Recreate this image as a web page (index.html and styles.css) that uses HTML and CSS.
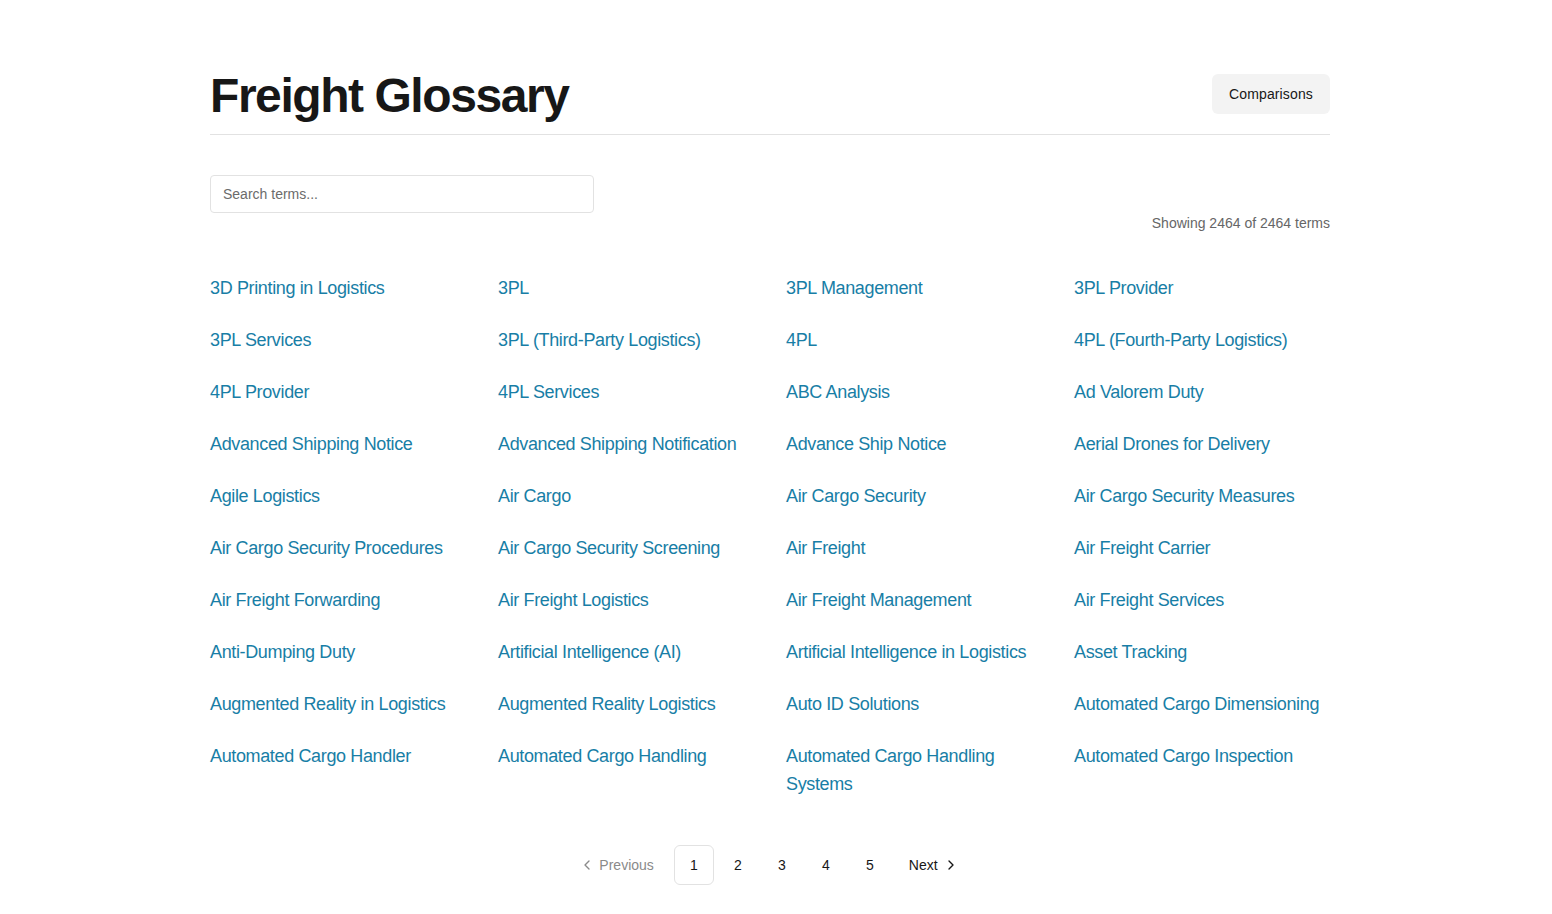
FILE: index.html
```html
<!DOCTYPE html>
<html lang="en">
<head>
<meta charset="utf-8">
<title>Freight Glossary</title>
<link rel="stylesheet" href="styles.css">
</head>
<body>
<div class="page">
  <header class="header">
    <h1 class="title">Freight Glossary</h1>
    <button class="btn-secondary">Comparisons</button>
  </header>
  <div class="search-row">
    <input class="search" type="text" placeholder="Search terms...">
  </div>
  <p class="count">Showing 2464 of 2464 terms</p>
  <ul class="terms">
    <li><a href="#">3D Printing in Logistics</a></li>
    <li><a href="#">3PL</a></li>
    <li><a href="#">3PL Management</a></li>
    <li><a href="#">3PL Provider</a></li>
    <li><a href="#">3PL Services</a></li>
    <li><a href="#">3PL (Third-Party Logistics)</a></li>
    <li><a href="#">4PL</a></li>
    <li><a href="#">4PL (Fourth-Party Logistics)</a></li>
    <li><a href="#">4PL Provider</a></li>
    <li><a href="#">4PL Services</a></li>
    <li><a href="#">ABC Analysis</a></li>
    <li><a href="#">Ad Valorem Duty</a></li>
    <li><a href="#">Advanced Shipping Notice</a></li>
    <li><a href="#">Advanced Shipping Notification</a></li>
    <li><a href="#">Advance Ship Notice</a></li>
    <li><a href="#">Aerial Drones for Delivery</a></li>
    <li><a href="#">Agile Logistics</a></li>
    <li><a href="#">Air Cargo</a></li>
    <li><a href="#">Air Cargo Security</a></li>
    <li><a href="#">Air Cargo Security Measures</a></li>
    <li><a href="#">Air Cargo Security Procedures</a></li>
    <li><a href="#">Air Cargo Security Screening</a></li>
    <li><a href="#">Air Freight</a></li>
    <li><a href="#">Air Freight Carrier</a></li>
    <li><a href="#">Air Freight Forwarding</a></li>
    <li><a href="#">Air Freight Logistics</a></li>
    <li><a href="#">Air Freight Management</a></li>
    <li><a href="#">Air Freight Services</a></li>
    <li><a href="#">Anti-Dumping Duty</a></li>
    <li><a href="#">Artificial Intelligence (AI)</a></li>
    <li><a href="#">Artificial Intelligence in Logistics</a></li>
    <li><a href="#">Asset Tracking</a></li>
    <li><a href="#">Augmented Reality in Logistics</a></li>
    <li><a href="#">Augmented Reality Logistics</a></li>
    <li><a href="#">Auto ID Solutions</a></li>
    <li><a href="#">Automated Cargo Dimensioning</a></li>
    <li><a href="#">Automated Cargo Handler</a></li>
    <li><a href="#">Automated Cargo Handling</a></li>
    <li><a href="#">Automated Cargo Handling Systems</a></li>
    <li><a href="#">Automated Cargo Inspection</a></li>
  </ul>
  <nav class="pagination">
    <a class="pg-prev" href="#"><svg width="16" height="16" viewBox="0 0 24 24" fill="none" stroke="currentColor" stroke-width="2" stroke-linecap="round" stroke-linejoin="round"><path d="M15 18l-6-6 6-6"/></svg>Previous</a>
    <a class="pg-num active" href="#">1</a>
    <a class="pg-num" href="#">2</a>
    <a class="pg-num" href="#">3</a>
    <a class="pg-num" href="#">4</a>
    <a class="pg-num" href="#">5</a>
    <a class="pg-next" href="#">Next<svg width="16" height="16" viewBox="0 0 24 24" fill="none" stroke="currentColor" stroke-width="2" stroke-linecap="round" stroke-linejoin="round"><path d="M9 18l6-6-6-6"/></svg></a>
  </nav>
</div>
</body>
</html>
```

FILE: styles.css
```css
* { box-sizing: border-box; }
html, body { margin: 0; padding: 0; background: #fff; }
body {
  font-family: "Liberation Sans", Arial, sans-serif;
  color: #171717;
}
.page {
  width: 1120px;
  margin-left: 210px;
  padding-top: 62px;
  padding-bottom: 40px;
}
.header {
  display: flex;
  justify-content: space-between;
  align-items: center;
  border-bottom: 1px solid #e2e2e2;
  padding-bottom: 12px;
}
.title {
  margin: 0;
  font-size: 48px;
  line-height: 60px;
  font-weight: 700;
  letter-spacing: -0.03em;
  color: #171717;
  position: relative;
  top: 4px;
}
.btn-secondary {
  font-family: inherit;
  font-size: 14px;
  font-weight: 400;
  letter-spacing: 0.01em;
  color: #171717;
  background: #f3f3f3;
  border: none;
  border-radius: 6px;
  height: 40px;
  padding: 0 17px;
  margin-top: 4px;
}
.search-row { margin-top: 40px; }
.search {
  width: 384px;
  height: 38px;
  border: 1px solid #e2e2e2;
  border-radius: 4px;
  padding: 0 12px;
  font-family: inherit;
  font-size: 14px;
  color: #171717;
  outline: none;
}
.search::placeholder { color: #6b6b6b; }
.count {
  margin: 0;
  text-align: right;
  font-size: 14px;
  line-height: 20px;
  color: #666;
}
.terms {
  list-style: none;
  margin: 41px 0 0;
  padding: 0;
  display: grid;
  grid-template-columns: repeat(4, 1fr);
  column-gap: 32px;
  row-gap: 24px;
}
.terms a {
  font-size: 18px;
  line-height: 28px;
  letter-spacing: -0.02em;
  color: #187ea6;
  text-decoration: none;
}
.pagination {
  margin-top: 47px;
  display: flex;
  justify-content: center;
  align-items: center;
  gap: 4px;
  padding-right: 2px;
}
.pagination a {
  text-decoration: none;
  font-size: 14px;
  color: #171717;
  height: 40px;
  display: flex;
  align-items: center;
  justify-content: center;
  border-radius: 6px;
}
.pg-num { width: 40px; }
.pg-num.active { border: 1px solid #e2e2e2; }
.pg-prev { color: #8a8a8a !important; padding: 0 16px 0 10px; gap: 4px; }
.pg-next { padding: 0 10px 0 15px; gap: 5px; }
```
